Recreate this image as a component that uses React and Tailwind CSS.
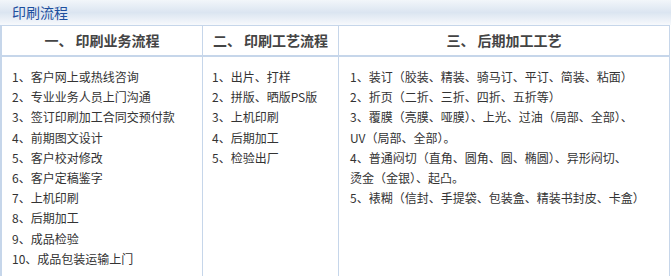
const columns = [
  {
    title: '一、 印刷业务流程',
    lines: [
      '1、客户网上或热线咨询',
      '2、专业业务人员上门沟通',
      '3、签订印刷加工合同交预付款',
      '4、前期图文设计',
      '5、客户校对修改',
      '6、客户定稿鉴字',
      '7、上机印刷',
      '8、后期加工',
      '9、成品检验',
      '10、成品包装运输上门',
    ],
  },
  {
    title: '二、 印刷工艺流程',
    lines: ['1、出片、打样', '2、拼版、晒版PS版', '3、上机印刷', '4、后期加工', '5、检验出厂'],
  },
  {
    title: '三、 后期加工工艺',
    lines: [
      '1、装订（胶装、精装、骑马订、平订、简装、粘面）',
      '2、折页（二折、三折、四折、五折等）',
      '3、覆膜（亮膜、哑膜）、上光、过油（局部、全部）、',
      'UV（局部、全部）。',
      '4、普通闷切（直角、圆角、圆、椭圆）、异形闷切、',
      '烫金（金银）、起凸。',
      '5、裱糊（信封、手提袋、包装盒、精装书封皮、卡盒）',
    ],
  },
];

const App = () => {
  return (
    <div className="w-[671px] h-[276px] overflow-hidden bg-white font-['Noto_Sans_CJK_SC','Noto_Sans',sans-serif]">
      <div className="h-[25px] px-[12px] text-[14px] leading-[24px] text-[#1d4f9e] bg-[linear-gradient(to_bottom,#f2f6fa,#dbe5f1_50%,#f7f9fc)]">
        印刷流程
      </div>
      <div className="w-[670px] h-[251px] border-l-2 border-r border-t border-[#c6d6ea] grid grid-cols-[200px_136px_1fr]">
        {columns.map((col, i) => (
          <div key={col.title} className={`flex flex-col ${i > 0 ? 'border-l border-[#c6d6ea]' : ''}`}>
            <div className="h-[31px] shrink-0 border-b-2 border-[#c6d6ea] flex items-center justify-center text-[14px] font-bold text-[#444] whitespace-pre">
              {col.title}
            </div>
            <div className={`pt-[10px] text-[12px] leading-[20.2px] text-[#333] whitespace-nowrap ${i === 0 ? 'pl-[10px]' : i === 1 ? 'pl-[9px]' : 'pl-[11px]'}`}>
              {col.lines.map((line) => (
                <div key={line}>{line}</div>
              ))}
            </div>
          </div>
        ))}
      </div>
    </div>
  );
};

export default App;
